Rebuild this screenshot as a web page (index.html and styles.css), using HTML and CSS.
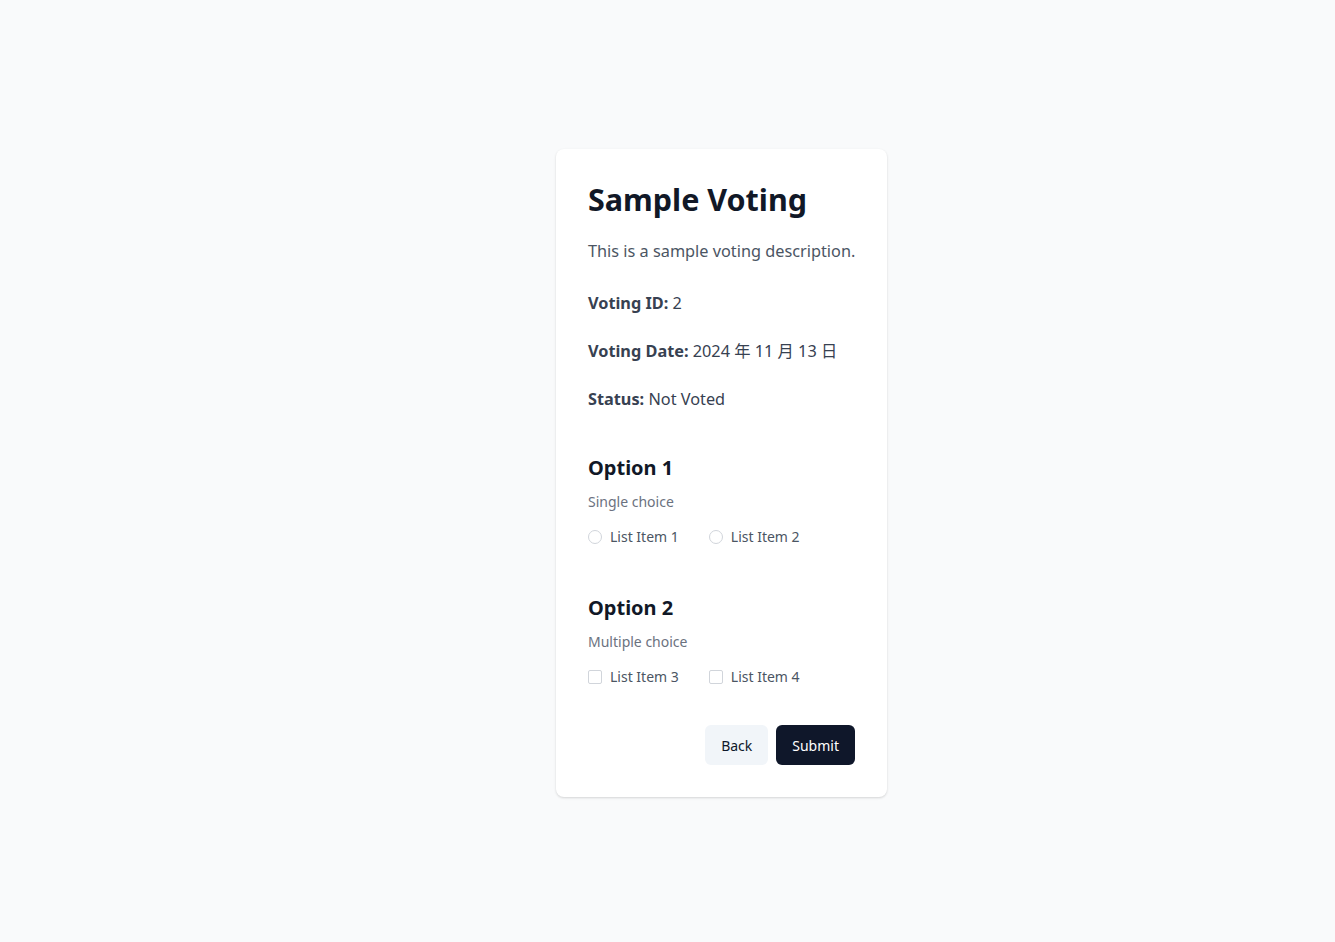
FILE: index.html
```html
<!DOCTYPE html>
<html lang="en">
<head>
<meta charset="utf-8">
<title>Sample Voting</title>
<link rel="stylesheet" href="styles.css">
</head>
<body>
<main class="page">
  <section class="card">
    <h1 class="title">Sample Voting</h1>
    <p class="desc">This is a sample voting description.</p>
    <p class="meta meta-first"><strong>Voting ID:</strong> 2</p>
    <p class="meta"><strong>Voting Date:</strong> 2024 年 11 月 13 日</p>
    <p class="meta"><strong>Status:</strong> Not Voted</p>

    <div class="option option-first">
      <h2 class="option-title">Option 1</h2>
      <p class="option-type">Single choice</p>
      <div class="choices">
        <label class="choice"><span class="radio"></span>List Item 1</label>
        <label class="choice"><span class="radio"></span>List Item 2</label>
      </div>
    </div>

    <div class="option">
      <h2 class="option-title">Option 2</h2>
      <p class="option-type">Multiple choice</p>
      <div class="choices">
        <label class="choice"><span class="check"></span>List Item 3</label>
        <label class="choice"><span class="check"></span>List Item 4</label>
      </div>
    </div>

    <div class="actions">
      <button class="btn btn-back" type="button">Back</button>
      <button class="btn btn-submit" type="button">Submit</button>
    </div>
  </section>
</main>
</body>
</html>
```

FILE: styles.css
```css
* { box-sizing: border-box; }
html, body {
  margin: 0;
  padding: 0;
  background: #f9fafb;
  font-family: "Noto Sans", "Noto Sans CJK SC", sans-serif;
  color: #374151;
}
.page {
  min-height: 942px;
  display: flex;
  justify-content: center;
  align-items: flex-start;
  padding-top: 149px;
  padding-left: 108px;
}
.card {
  width: 331px;
  background: #ffffff;
  border-radius: 8px;
  padding: 32px;
  box-shadow: 0 1px 3px rgba(0,0,0,0.10), 0 1px 2px rgba(0,0,0,0.06);
}
.title {
  margin: 0;
  font-size: 30.5px;
  line-height: 36px;
  font-weight: 700;
  color: #111827;
}
.desc {
  margin: 22px 0 0;
  font-size: 16.3px;
  line-height: 24px;
  color: #4b5563;
  white-space: nowrap;
}
.meta {
  margin: 24px 0 0;
  font-size: 16.3px;
  line-height: 24px;
  color: #374151;
  white-space: nowrap;
}
.meta-first { margin-top: 28px; }
.meta strong { font-weight: 700; }
.option { margin-top: 47px; }
.option-first { margin-top: 43px; }
.option-title {
  margin: 0;
  font-size: 20px;
  line-height: 28px;
  font-weight: 700;
  color: #111827;
}
.option-type {
  margin: 10px 0 0;
  font-size: 14px;
  line-height: 20px;
  color: #6b7280;
}
.choices {
  margin-top: 15px;
  display: flex;
  gap: 30px;
}
.choice {
  display: flex;
  align-items: center;
  gap: 8px;
  font-size: 14px;
  line-height: 20px;
  color: #4b5563;
}
.radio {
  width: 14px;
  height: 14px;
  border: 1px solid #d1d5db;
  border-radius: 50%;
  background: #fff;
}
.check {
  width: 14px;
  height: 14px;
  border: 1px solid #d1d5db;
  border-radius: 2px;
  background: #fff;
}
.actions {
  margin-top: 38px;
  display: flex;
  justify-content: flex-end;
  gap: 8px;
}
.btn {
  height: 40px;
  padding: 0 16px;
  border: none;
  border-radius: 6px;
  font-family: inherit;
  font-size: 14px;
  font-weight: 400;
  cursor: pointer;
}
.btn-back {
  background: #f1f5f9;
  color: #0f172a;
}
.btn-submit {
  background: #0f172a;
  color: #ffffff;
}
```
